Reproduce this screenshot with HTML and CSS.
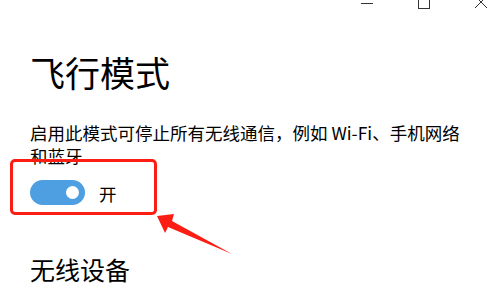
FILE: index.html
```html
<!DOCTYPE html>
<html lang="zh-CN">
<head>
    <meta charset="UTF-8">
    <meta name="viewport" content="width=device-width, initial-scale=1.0">
    <title>飞行模式</title>
    <link rel="stylesheet" href="styles.css">
</head>
<body>
    <div class="window">
        <!-- Window caption buttons (top is cut off) -->
        <div class="titlebar">
            <svg class="caption-btn" width="12" height="10" viewBox="0 0 12 10">
                <line x1="0" y1="3.5" x2="12" y2="3.5" stroke="#333" stroke-width="1"/>
            </svg>
            <svg class="caption-btn" width="12" height="10" viewBox="0 0 12 10">
                <rect x="0.5" y="-4" width="11" height="12.5" fill="none" stroke="#333" stroke-width="1"/>
            </svg>
            <svg class="caption-btn" width="12" height="10" viewBox="0 0 12 10">
                <line x1="0" y1="-4" x2="12" y2="8" stroke="#333" stroke-width="1"/>
                <line x1="12" y1="-4" x2="0" y2="8" stroke="#333" stroke-width="1"/>
            </svg>
        </div>

        <div class="content">
            <h1 class="page-title">飞行模式</h1>
            <p class="desc">启用此模式可停止所有无线通信，例如 Wi-Fi、手机网络和蓝牙</p>

            <!-- Airplane mode switch -->
            <div class="toggle-row">
                <span class="toggle"><span class="knob"></span></span>
                <span class="toggle-label">开</span>
            </div>

            <h2 class="section-title">无线设备</h2>
        </div>

        <!-- Red annotation drawn over the screenshot -->
        <div class="highlight-box"></div>
        <svg class="callout-arrow" width="488" height="297" viewBox="0 0 488 297">
            <polygon points="157,216 174,214 172,221 232,254 168,227 165,233" fill="#fc1d14"/>
        </svg>
    </div>
</body>
</html>
```

FILE: styles.css
```css
/* Page reset */
body {
    margin: 0;
    background-color: #fff;
    font-family: "Noto Sans CJK SC", "Noto Sans", sans-serif;
    color: #000;
    overflow: hidden;
}
.window {
    position: relative;
    width: 488px;
    height: 297px;
    overflow: hidden;
}
/* Caption buttons */
.titlebar {
    display: flex;
    justify-content: flex-end;
    gap: 45px;
    height: 10px;
    padding-right: 1px;
}
.caption-btn {
    display: block;
    overflow: hidden;
}
/* Main settings content */
.content {
    padding-left: 30px;
}
.page-title {
    margin: 38px 0 0;
    font-size: 35px;
    font-weight: normal;
    line-height: 48px;
}
.desc {
    max-width: 440px;
    margin: 25px 0 0;
    font-size: 17.5px;
    line-height: 23px;
}
.toggle-row {
    display: flex;
    align-items: center;
    gap: 14px;
    margin-top: 12px;
}
.toggle {
    display: flex;
    align-items: center;
    justify-content: flex-end;
    width: 55px;
    height: 25px;
    padding-right: 6px;
    box-sizing: border-box;
    border-radius: 13px;
    background-color: #4d9fe2;
}
.knob {
    width: 13px;
    height: 13px;
    border-radius: 50%;
    background-color: #fff;
}
.toggle-label {
    font-size: 17.5px;
    line-height: 25px;
    padding-top: 2px;
}
.section-title {
    margin: 46px 0 0;
    font-size: 25px;
    font-weight: normal;
    line-height: 34px;
}
/* Annotation overlay */
.highlight-box {
    position: absolute;
    left: 10px;
    top: 159px;
    width: 147px;
    height: 56px;
    box-sizing: border-box;
    border: 3px solid #fc1d14;
    border-radius: 5px;
}
.callout-arrow {
    position: absolute;
    left: 0;
    top: 0;
}
```
